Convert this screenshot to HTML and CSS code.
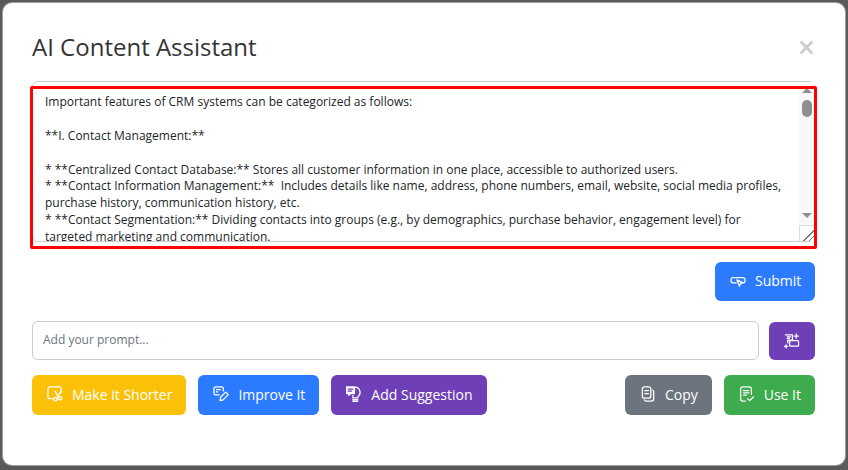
FILE: index.html
```html
<!DOCTYPE html>
<html lang="en">
<head>
<meta charset="utf-8">
<title>AI Content Assistant</title>
<link rel="stylesheet" href="styles.css">
</head>
<body>
<div class="modal">
  <header class="modal-head">
    <h1 class="title">AI Content Assistant</h1>
    <svg class="close" viewBox="0 0 14 14" aria-label="Close"><path d="M1.5 1.5l11 11M12.5 1.5l-11 11"/></svg>
  </header>
  <div class="output-wrap">
    <textarea class="output" readonly>Important features of CRM systems can be categorized as follows:

**I. Contact Management:**

* **Centralized Contact Database:** Stores all customer information in one place, accessible to authorized users.
* **Contact Information Management:**  Includes details like name, address, phone numbers, email, website, social media profiles, purchase history, communication history, etc.
* **Contact Segmentation:** Dividing contacts into groups (e.g., by demographics, purchase behavior, engagement level) for targeted marketing and communication.
* **Contact Activity Tracking:** Logging all interactions with each customer, including calls, emails, and meetings.</textarea>
    <div class="scrollbar" aria-hidden="true">
      <span class="arrow-up"></span>
      <span class="thumb"></span>
      <span class="arrow-down"></span>
      <span class="grip"></span>
    </div>
    <div class="highlight"></div>
  </div>
  <div class="submit-row">
    <button class="btn blue submit">
      <svg class="ico" viewBox="0 0 17 17"><path d="M11.500 10.500h2.300a2.200 2.200 0 0 0 2.200-2.200V7a2.200 2.200 0 0 0-2.200-2.200H3.200A2.200 2.200 0 0 0 1 7v1.300a2.200 2.200 0 0 0 2.200 2.200h3.300"/><path d="M7.300 7.300l6.200 3-2.500 1-1 2.700z"/></svg>
      Submit
    </button>
  </div>
  <div class="prompt-row">
    <input class="prompt" type="text" placeholder="Add your prompt...">
    <button class="btn purple magic">
      <svg class="ico" viewBox="0 0 17 17"><path d="M1.500 2h7.500v5.500H4v3"/><path d="M3.500 4h3.500M3.500 5.800h2"/><rect x="6" y="8" width="9.500" height="6" rx="1"/><path d="M13 1v4.500M10.800 3.200h4.500M2.200 12.500v3.500M.5 14.200H4"/></svg>
    </button>
  </div>
  <div class="action-row">
    <div class="group">
      <button class="btn yellow">
        <svg class="ico" viewBox="0 0 17 17"><path d="M7.500 13.500H3.200A2.200 2.200 0 0 1 1 11.300V3.200A2.200 2.200 0 0 1 3.200 1h9.600A2.200 2.200 0 0 1 15 3.200v4.300"/><path d="M8.500 5.500l3.500 6M15 5.500l-4 6"/><circle cx="9" cy="14" r="1.800"/><circle cx="14" cy="13" r="1.800"/></svg>
        Make it Shorter
      </button>
      <button class="btn blue">
        <svg class="ico" viewBox="0 0 17 17"><path d="M6.500 9.500H2.800a1.800 1.800 0 0 1-1.800-1.800V2.800A1.800 1.800 0 0 1 2.800 1h6.400A1.800 1.800 0 0 1 11 2.800v2.500"/><path d="M3.500 3.800h4.500M3.500 6.300h1.500"/><path d="M7.500 15.500l.6-3.500 5.400-5.500 2.700 2.700-5.400 5.600z"/></svg>
        Improve It
      </button>
      <button class="btn purple">
        <svg class="ico" viewBox="0 0 17 17"><path class="solid" d="M.5 1h8.500v7H5L3 9.800V8H.5z"/><path class="cut" d="M2.300 3.200h5M2.300 5.500h3.500"/><path d="M9.800 1.200a5.500 5.500 0 0 1 3.700 9.200c-.8.800-1 1.500-1 2.300H7.300v-2.500"/><path d="M7.300 14.500h5.200M7.300 16.200h5.200"/></svg>
        Add Suggestion
      </button>
    </div>
    <div class="group">
      <button class="btn gray">
        <svg class="ico" viewBox="0 0 17 17"><rect x="2.500" y="1" width="9" height="12" rx="2.200"/><path d="M5 4.800h4M5 8h4"/><path d="M13.500 4.500A1.800 1.800 0 0 1 14.500 6v7.500a2.500 2.500 0 0 1-2.500 2.500H6.500a2 2 0 0 1-1.800-1.200"/></svg>
        Copy
      </button>
      <button class="btn green">
        <svg class="ico" viewBox="0 0 17 17"><path d="M6.800 16H4a2.200 2.200 0 0 1-2.200-2.200V3.200A2.200 2.200 0 0 1 4 1h7a2.200 2.200 0 0 1 2.200 2.200V9"/><path d="M4.800 4.800h5.700M4.800 7.300h5.700M4.800 9.800h3"/><path d="M9.300 13.500l2 2 4.200-4"/></svg>
        Use It
      </button>
    </div>
  </div>
</div>
</body>
</html>
```

FILE: styles.css
```css
* { box-sizing: border-box; }
html, body { height: 100%; }
body {
  margin: 0;
  padding: 3px 3px 5px 3px;
  background: #5a5a5a;
  font-family: "Open Sans", "Noto Sans", sans-serif;
  overflow: hidden;
}
.modal {
  height: 462px;
  background: #fff;
  border-radius: 9px;
  box-shadow: 0 0 0 1px #a0a0a0;
  padding: 0 30px 0 29px;
}
.modal-head {
  height: 78px;
  display: flex;
  align-items: center;
  justify-content: space-between;
  padding-top: 10px;
  padding-bottom: 2px;
}
.title {
  margin: 0;
  font-size: 24px;
  font-weight: 400;
  color: #333;
}
.close {
  width: 15px;
  height: 15px;
  margin: 3px 1px 0 0;
  fill: none;
  stroke: #ccc;
  stroke-width: 2.600;
}
.output-wrap {
  position: relative;
  height: 161px;
}
.output {
  display: block;
  width: 100%;
  height: 100%;
  margin: 0;
  padding: 12.400px 27px 12px 12px;
  border: 1px solid #ccc;
  border-radius: 6px;
  font: 12px/16.8px "Open Sans", sans-serif;
  color: #212529;
  outline: none;
  overflow: hidden;
  resize: none;
}
.scrollbar {
  position: absolute;
  top: 1px;
  right: 1px;
  bottom: 1px;
  width: 15px;
  display: flex;
  flex-direction: column;
  align-items: center;
  background: #f8f8f8;
}
.arrow-up, .arrow-down {
  flex: none;
  width: 0;
  height: 0;
  border-left: 5px solid transparent;
  border-right: 5px solid transparent;
}
.arrow-up { margin-top: 6px; border-bottom: 5px solid #8f8f8f; }
.arrow-down { margin-top: auto; border-top: 5px solid #8f8f8f; }
.thumb {
  flex: none;
  width: 10px;
  height: 17px;
  margin-top: 7px;
  border-radius: 5px;
  background: #8f8f8f;
}
.grip {
  flex: none;
  width: 15px;
  height: 16px;
  margin-top: 7px;
  background-color: #fff;
  background-image: linear-gradient(135deg, transparent 62%, #777 62%, #777 67%, transparent 67%, transparent 80%, #777 80%, #777 85%, transparent 85%);
  border: 1px solid #ddd;
  border-right: 0;
  border-bottom: 0;
}
.highlight {
  position: absolute;
  left: -2px;
  top: 5px;
  width: 787px;
  height: 163px;
  border: 3px solid #f00;
  border-radius: 2px;
  pointer-events: none;
}
.submit-row {
  display: flex;
  justify-content: flex-end;
  margin-top: 20px;
}
.btn {
  display: flex;
  align-items: center;
  gap: 9px;
  height: 40px;
  padding: 0 14px 2px 15px;
  border: 0;
  border-radius: 6px;
  color: #fff;
  font: 500 14px "Open Sans", sans-serif;
  white-space: nowrap;
}
.ico {
  width: 16px;
  height: 16px;
  flex: none;
  fill: none;
  stroke: #fff;
  stroke-width: 1.350;
  stroke-linecap: round;
  stroke-linejoin: round;
}
.ico .solid { fill: #fff; }
.ico .cut { stroke: #6f3fb8; }
.blue { background: #2c7bff; }
.purple { background: #6f3fb8; }
.yellow { background: #fbc108; }
.gray { background: #6c757d; }
.green { background: #3dab4e; }
.submit { width: 100px; height: 39px; }
.prompt-row {
  display: flex;
  align-items: flex-end;
  gap: 10px;
  margin-top: 20px;
}
.prompt {
  flex: 1;
  height: 39px;
  padding: 0 10px 2px;
  border: 1px solid #ccc;
  border-radius: 6px;
  font: 12px "Open Sans", sans-serif;
  color: #212529;
  outline: none;
}
.prompt::placeholder { color: #6c757d; opacity: 1; }
.magic {
  width: 46px;
  height: 38px;
  padding: 0;
  justify-content: center;
}
.action-row {
  display: flex;
  justify-content: space-between;
  margin-top: 15px;
}
.group { display: flex; gap: 12px; }
```
